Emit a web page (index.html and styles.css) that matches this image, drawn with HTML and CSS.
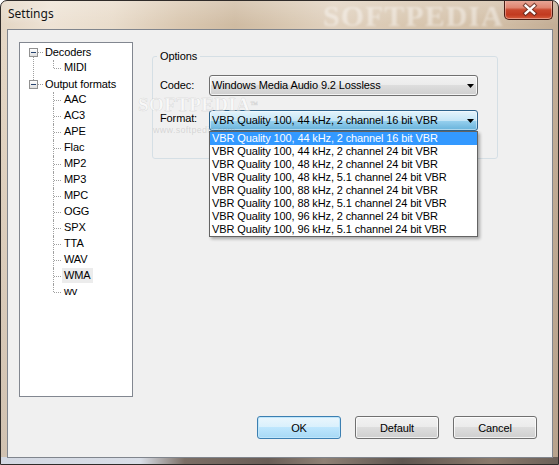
FILE: index.html
```html
<!DOCTYPE html>
<html>
<head>
<meta charset="utf-8">
<title>Settings</title>
<link rel="stylesheet" href="styles.css">
</head>
<body>
<div class="window">
  <div class="titlebar">
    <span class="title">Settings</span>
    <button class="close" aria-label="Close">
      <svg width="49" height="19" viewBox="0 0 49 19">
        <path d="M21.5 5.5 L30.5 13.5 M30.5 5.5 L21.5 13.5" stroke="#5a2a20" stroke-width="4.6" stroke-linecap="square" opacity="0.75"/>
        <path d="M21.5 5.5 L30.5 13.5 M30.5 5.5 L21.5 13.5" stroke="#ffffff" stroke-width="2.4" stroke-linecap="square"/>
      </svg>
    </button>
  </div>
  <div class="client">
    <div class="main">
      <div class="tree">
        <ul class="roots">
          <li class="node first">
            <div class="row"><span class="exp"></span><span class="hl"></span><span class="lbl">Decoders</span></div>
            <ul class="kids">
              <li class="last"><span class="lbl">MIDI</span></li>
            </ul>
          </li>
          <li class="node">
            <div class="row"><span class="exp"></span><span class="hl"></span><span class="lbl">Output formats</span></div>
            <ul class="kids">
              <li><span class="lbl">AAC</span></li>
              <li><span class="lbl">AC3</span></li>
              <li><span class="lbl">APE</span></li>
              <li><span class="lbl">Flac</span></li>
              <li><span class="lbl">MP2</span></li>
              <li><span class="lbl">MP3</span></li>
              <li><span class="lbl">MPC</span></li>
              <li><span class="lbl">OGG</span></li>
              <li><span class="lbl">SPX</span></li>
              <li><span class="lbl">TTA</span></li>
              <li><span class="lbl">WAV</span></li>
              <li><span class="lbl sel">WMA</span></li>
              <li class="last"><span class="lbl">wv</span></li>
            </ul>
          </li>
        </ul>
      </div>
      <div class="panel">
        <fieldset class="group">
          <legend>Options</legend>
          <div class="field codec">
            <label class="flabel">Codec:</label>
            <div class="combo normal">
              <span class="ctext">Windows Media Audio 9.2 Lossless</span>
              <svg class="arrow" width="7" height="4" viewBox="0 0 7 4"><polygon points="0,0 7,0 3.5,4" fill="#000"/></svg>
            </div>
          </div>
          <div class="field format">
            <label class="flabel">Format:</label>
            <div class="combo-wrap">
              <div class="combo hot">
                <span class="ctext">VBR Quality 100, 44 kHz, 2 channel 16 bit VBR</span>
                <svg class="arrow" width="7" height="4" viewBox="0 0 7 4"><polygon points="0,0 7,0 3.5,4" fill="#000"/></svg>
              </div>
              <ul class="dropdown">
                <li class="on">VBR Quality 100, 44 kHz, 2 channel 16 bit VBR</li>
                <li>VBR Quality 100, 44 kHz, 2 channel 24 bit VBR</li>
                <li>VBR Quality 100, 48 kHz, 2 channel 24 bit VBR</li>
                <li>VBR Quality 100, 48 kHz, 5.1 channel 24 bit VBR</li>
                <li>VBR Quality 100, 88 kHz, 2 channel 24 bit VBR</li>
                <li>VBR Quality 100, 88 kHz, 5.1 channel 24 bit VBR</li>
                <li>VBR Quality 100, 96 kHz, 2 channel 24 bit VBR</li>
                <li>VBR Quality 100, 96 kHz, 5.1 channel 24 bit VBR</li>
              </ul>
            </div>
          </div>
        </fieldset>
      </div>
    </div>
    <div class="buttons">
      <button class="btn default">OK</button>
      <button class="btn">Default</button>
      <button class="btn">Cancel</button>
    </div>
  </div>
  <div class="wm-title">SOFTPEDIA</div>
  <div class="wm-mid">SOFTPEDIA<span class="tm">™</span></div>
  <div class="wm-url">www.softpedia.com</div>
</div>
</body>
</html>
```

FILE: styles.css
```css
html, body {
  margin: 0;
  padding: 0;
  background: #ffffff;
}

body {
  font-family: "Liberation Sans", Arial, sans-serif;
  font-size: 11px;
  letter-spacing: -0.12px;
  color: #000;
}

.window {
  position: relative;
  width: 559px;
  height: 465px;
  box-sizing: border-box;
  border: 1px solid #2f2b29;
  border-radius: 7px 7px 0 0;
  overflow: hidden;
  display: flex;
  flex-direction: column;
  background:
    linear-gradient(90deg, #d3d8e2 0%, #d9dee7 25%, #7b6e65 33%, #6a5e57 48%, #8f8175 58%, #5f5650 72%, #8a7a6c 88%, #6c6058 100%) left bottom / 100% 7px no-repeat,
    linear-gradient(180deg, rgba(255,255,255,0.22) 0px, rgba(255,255,255,0) 24px),
    linear-gradient(180deg, rgba(0,0,0,0) 40px, rgba(150,130,115,0.25) 460px),
    linear-gradient(90deg, #e4d6c4 0%, #eee3d5 9%, #e9dccb 20%, #dac8b1 32%, #cfbba2 42%, #d9c8b2 52%, #e1d2c0 60%, #d8c6af 74%, #d3c0a8 88%, #c3ad95 100%);
}

.titlebar {
  flex: none;
  height: 28px;
  display: flex;
  align-items: flex-start;
  padding-left: 7px;
  box-sizing: border-box;
}

.title {
  padding-top: 5px;
  font-family: "Noto Sans", "Liberation Sans", sans-serif;
  font-size: 12px;
  line-height: 16px;
  letter-spacing: 0;
  color: #141414;
  text-shadow: 0 0 7px rgba(255,255,255,0.9);
}

.close {
  position: relative;
  z-index: 4;
  margin-left: auto;
  margin-right: 5px;
  margin-top: -1px;
  width: 49px;
  height: 20px;
  padding: 0;
  box-sizing: border-box;
  border: 1px solid #4a1d15;
  border-top: none;
  border-radius: 0 0 5px 5px;
  background: linear-gradient(180deg, #e9aa9b 0%, #df8570 40%, #c9472d 52%, #c23a20 78%, #d65e3e 100%);
  box-shadow: inset 0 0 0 1px rgba(255,220,210,0.45);
  display: flex;
  align-items: center;
  justify-content: center;
}

.close svg {
  display: block;
}

.client {
  flex: 1;
  margin: 0 5px 6px 6px;
  border: 1px solid #80858d;
  background: #f0f0f0;
  display: flex;
  flex-direction: column;
  padding: 12px 15px 18px 11px;
  min-height: 0;
}

.main {
  flex: 1;
  display: flex;
  align-items: flex-start;
}

/* ---------- tree ---------- */
.tree {
  flex: none;
  width: 114px;
  height: 355px;
  box-sizing: border-box;
  border: 1px solid #828790;
  background: #ffffff;
}

.roots {
  list-style: none;
  margin: 0;
  padding: 1px 0 0 0;
}

.node {
  position: relative;
}

.node.first::after {
  content: "";
  position: absolute;
  left: 13px;
  top: 13px;
  height: 23px;
  border-left: 1px dotted #a0a0a0;
}

.row {
  display: flex;
  align-items: center;
  height: 16px;
  padding-left: 9px;
}

.exp {
  flex: none;
  width: 9px;
  height: 9px;
  box-sizing: border-box;
  border: 1px solid #919191;
  background: linear-gradient(180deg, #ffffff, #dedede);
  display: flex;
  align-items: center;
  justify-content: center;
}

.exp::before {
  content: "";
  width: 5px;
  height: 1px;
  background: #27446f;
}

.hl {
  flex: none;
  width: 5px;
  height: 0;
  border-top: 1px dotted #a0a0a0;
}

.lbl {
  display: inline-block;
  padding: 0 2px;
  height: 15px;
  line-height: 15px;
  white-space: nowrap;
}

.lbl.sel {
  background: #ececec;
}

.kids {
  list-style: none;
  margin: 0;
  padding: 0;
}

.kids li {
  position: relative;
  height: 16px;
  padding-left: 42px;
  display: flex;
  align-items: flex-start;
  padding-top: 0;
}

.kids li::before {
  content: "";
  position: absolute;
  left: 33px;
  top: 0;
  height: 16px;
  border-left: 1px dotted #a0a0a0;
}

.kids li.last::before {
  height: 8px;
}

.kids li::after {
  content: "";
  position: absolute;
  left: 34px;
  top: 8px;
  width: 7px;
  border-top: 1px dotted #a0a0a0;
}

/* ---------- options group ---------- */
.panel {
  margin-left: 19px;
  margin-top: 8px;
}

.group {
  margin: 0;
  width: 346px;
  box-sizing: border-box;
  border: 1px solid #d5dfe5;
  border-radius: 3px;
  padding: 12px 19px 27px 4px;
  min-inline-size: 0;
}

.group legend {
  padding: 0 3px;
  margin: 0;
  font-size: 11px;
  line-height: 13px;
}

.field {
  display: flex;
  align-items: flex-start;
}

.field.format {
  margin-top: 14px;
}

.flabel {
  flex: none;
  width: 52px;
  box-sizing: border-box;
  padding-left: 3px;
  line-height: 13px;
}

.codec .flabel {
  padding-top: 4px;
}

.format .flabel {
  padding-top: 2px;
}

.combo {
  width: 269px;
  height: 21px;
  box-sizing: border-box;
  border: 1px solid #707070;
  border-radius: 3px;
  display: flex;
  align-items: center;
  justify-content: space-between;
  padding: 0 3px 0 2px;
}

.combo.normal {
  background: linear-gradient(180deg, #f2f2f2 0%, #ebebeb 50%, #dddddd 50%, #cfcfcf 100%);
  box-shadow: inset 0 0 0 1px rgba(255,255,255,0.75);
}

.combo.hot {
  border-color: #2c628b;
  background: linear-gradient(180deg, #e5f4fc 0%, #c4e5f6 50%, #98d1ef 50%, #68b3db 100%);
  box-shadow: inset 0 0 0 1px rgba(255,255,255,0.45);
}

.ctext {
  white-space: nowrap;
  line-height: 13px;
}

.arrow {
  display: block;
  flex: none;
}

.combo-wrap {
  position: relative;
}

.dropdown {
  position: absolute;
  left: 0;
  top: 100%;
  z-index: 5;
  width: 269px;
  box-sizing: border-box;
  margin: 0;
  padding: 0;
  list-style: none;
  border: 1px solid #646464;
  background: #ffffff;
  box-shadow: 2px 2px 3px rgba(0,0,0,0.3);
}

.dropdown li {
  height: 13px;
  line-height: 13px;
  padding-left: 2px;
  white-space: nowrap;
}

.dropdown li.on {
  background: #3399ff;
  color: #ffffff;
}

/* ---------- buttons ---------- */
.buttons {
  flex: none;
  display: flex;
  justify-content: flex-end;
  gap: 14px;
}

.btn {
  width: 84px;
  height: 23px;
  box-sizing: border-box;
  padding: 0;
  border: 1px solid #707070;
  border-radius: 3px;
  background: linear-gradient(180deg, #f2f2f2 0%, #ebebeb 50%, #dddddd 50%, #cfcfcf 100%);
  box-shadow: inset 0 0 0 1px rgba(255,255,255,0.75);
  font-family: "Liberation Sans", Arial, sans-serif;
  font-size: 11px;
  letter-spacing: -0.12px;
  color: #000;
}

.btn.default {
  border-color: #3c7fb1;
  background: linear-gradient(180deg, #eaf6fd 0%, #d9f0fc 50%, #bee6fd 50%, #a7d9f5 100%);
  box-shadow: inset 0 0 0 1px #bfe6fb;
}

/* ---------- watermarks ---------- */
.wm-title {
  position: absolute;
  left: 322px;
  top: 0;
  z-index: 2;
  font-family: "Liberation Serif", serif;
  font-weight: bold;
  font-size: 30px;
  line-height: 30px;
  letter-spacing: 1px;
  color: rgba(255,255,255,0.42);
  filter: blur(1px);
  pointer-events: none;
}

.wm-mid {
  position: absolute;
  left: 137px;
  top: 94px;
  z-index: 3;
  font-family: "Liberation Serif", serif;
  font-weight: bold;
  font-size: 19px;
  line-height: 20px;
  letter-spacing: 0.4px;
  color: rgba(255,255,255,0.6);
  -webkit-text-stroke: 0.5px rgba(110,110,110,0.22);
  pointer-events: none;
}

.wm-mid .tm {
  font-size: 8px;
  vertical-align: top;
  font-weight: normal;
}

.wm-url {
  position: absolute;
  left: 152px;
  top: 124px;
  z-index: 3;
  font-family: "Liberation Sans", sans-serif;
  font-size: 9px;
  letter-spacing: 0.3px;
  color: rgba(140,140,140,0.28);
  pointer-events: none;
}
```
